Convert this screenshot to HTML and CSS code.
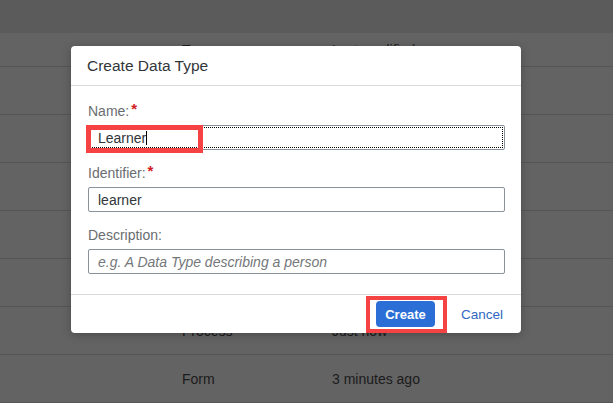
FILE: index.html
```html
<!DOCTYPE html>
<html lang="en">
<head>
<meta charset="utf-8">
<title>Create Data Type</title>
<link rel="stylesheet" href="styles.css">
</head>
<body>
<div class="page">
  <div class="topbar"></div>
  <div class="table">
    <div class="row head"><span></span><span>Type</span><span>Last modified</span></div>
    <div class="row"><span></span><span>Form</span><span>5 minutes ago</span></div>
    <div class="row"><span></span><span>Form</span><span>6 minutes ago</span></div>
    <div class="row"><span></span><span>Process</span><span>7 minutes ago</span></div>
    <div class="row"><span></span><span>Form</span><span>8 minutes ago</span></div>
    <div class="row"><span></span><span>Form</span><span>9 minutes ago</span></div>
    <div class="row"><span></span><span>Process</span><span>Just now</span></div>
    <div class="row"><span></span><span>Form</span><span>3 minutes ago</span></div>
  </div>
</div>
<div class="overlay"></div>
<div class="dialog">
  <div class="dialog-header">Create Data Type</div>
  <div class="dialog-body">
    <div class="field">
      <div class="label">Name:<span class="req">*</span></div>
      <div class="input focused">Learner<span class="caret"></span></div>
    </div>
    <div class="field">
      <div class="label">Identifier:<span class="req">*</span></div>
      <div class="input">learner</div>
    </div>
    <div class="field">
      <div class="label">Description:</div>
      <div class="input placeholder">e.g. A Data Type describing a person</div>
    </div>
  </div>
  <div class="dialog-footer">
    <button class="btn btn-primary">Create</button>
    <button class="btn btn-link">Cancel</button>
  </div>
</div>
<div class="mark mark-name"></div>
<div class="mark mark-create"></div>
</body>
</html>
```

FILE: styles.css
```css
* { box-sizing: border-box; }
html, body { margin: 0; padding: 0; }
body {
  width: 613px;
  height: 403px;
  overflow: hidden;
  background: #ffffff;
  font-family: "Liberation Sans", Arial, sans-serif;
  color: #32363a;
  position: relative;
}
.page { width: 100%; }
.topbar { height: 33px; background: #e9e9e9; }
.row {
  display: grid;
  grid-template-columns: 182px 150px 1fr;
  align-items: center;
  height: 48px;
  border-bottom: 1px solid #dcdcdc;
  font-size: 14px;
  color: #4a4a4a;
}
.row.head { height: 34px; color: #4a4a4a; }
.overlay {
  position: absolute;
  inset: 0;
  background: rgba(0, 0, 0, 0.61);
}
.dialog {
  position: absolute;
  left: 71px;
  top: 46px;
  width: 450px;
  background: #fff;
  border-radius: 4px;
  box-shadow: 0 2px 8px rgba(0, 0, 0, 0.25);
}
.dialog-header {
  height: 40px;
  display: flex;
  align-items: center;
  padding: 0 16px;
  font-size: 15.5px;
  color: #32363a;
  border-bottom: 1px solid #d9d9d9;
}
.dialog-body { padding: 15px 16px 7px 17px; }
.field { margin-bottom: 13px; }
.label {
  height: 20px;
  line-height: 20px;
  margin-bottom: 4px;
  font-size: 14px;
  color: #6a6d70;
}
.req {
  color: #d4191f;
  font-weight: bold;
  margin-left: 2px;
  font-size: 15px;
  position: relative;
  top: -2px;
}
.input {
  height: 25px;
  border: 1px solid #89919a;
  border-radius: 2px;
  padding: 0 9px;
  display: flex;
  align-items: center;
  font-size: 14px;
  color: #32363a;
  background: #fff;
}
.input.focused {
  outline: 1px dotted #000;
  outline-offset: -3px;
}
.caret {
  display: inline-block;
  width: 1px;
  height: 14px;
  background: #000;
}
.input.placeholder {
  font-style: italic;
  color: #74777a;
}
.dialog-footer {
  border-top: 1px solid #d9d9d9;
  padding: 6px 10px 6px 16px;
  display: flex;
  justify-content: flex-end;
  gap: 18px;
}
.btn {
  height: 26px;
  font-family: inherit;
  font-size: 13px;
  border-radius: 4px;
  border: none;
  padding: 0 9px;
  cursor: pointer;
}
.btn-primary {
  background: #2b6fd6;
  color: #fff;
  font-weight: bold;
  width: 59px;
}
.btn-link {
  background: transparent;
  color: #3068c2;
  padding: 0 8px;
  font-size: 13.5px;
}
.mark {
  position: absolute;
  border: 5px solid #f54242;
}
.mark-name { left: 86px; top: 125px; width: 117px; height: 28px; }
.mark-create { left: 366px; top: 296px; width: 81px; height: 37px; border-width: 4px; }
```
